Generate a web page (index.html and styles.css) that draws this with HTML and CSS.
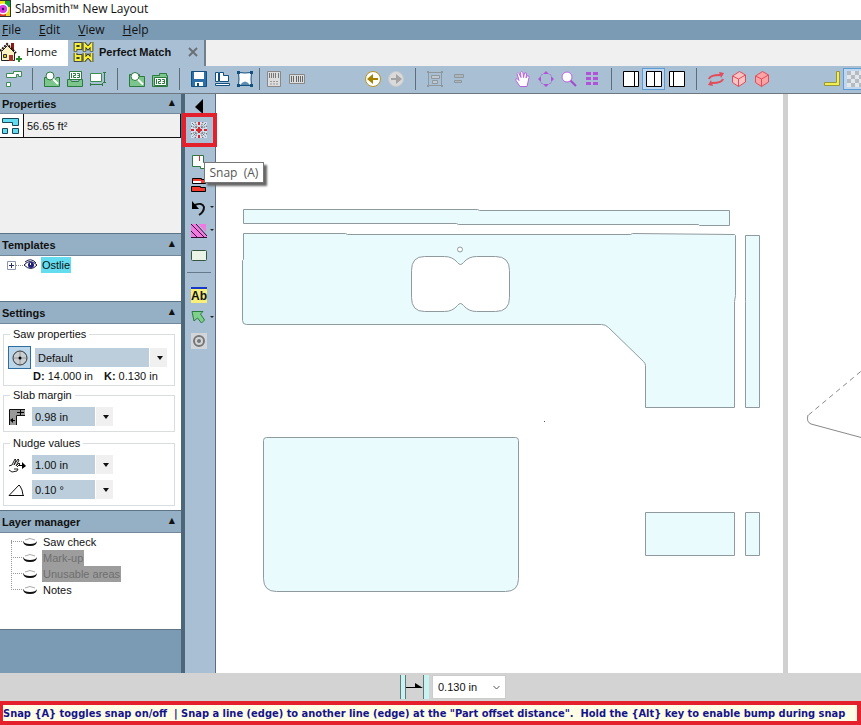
FILE: index.html
```html
<!DOCTYPE html>
<html lang="en">
<head>
<meta charset="utf-8">
<title>Slabsmith New Layout</title>
<link rel="stylesheet" href="styles.css">
</head>
<body>
<header class="titlebar">
  <svg class="app-icon" width="11" height="18" viewBox="0 0 11 18" aria-hidden="true"><path fill="#333" d="M0 0h11v17H0z"/><path fill="#f7e01c" d="M0 1h5v5H0z"/><path fill="#14a53c" d="M5 1h5v6H5z"/><path fill="#e8df20" d="M6 7h4v9H6z"/><path fill="#e33b22" d="M0 13h6v3H0z"/><circle cx="3" cy="9" r="5.500" fill="#fff"/><circle cx="3" cy="9" r="4" fill="#d43be0"/><circle cx="3" cy="9" r="1.200" fill="#3a0b60"/></svg>
  <h1>Slabsmith™ New Layout</h1>
</header>
<nav class="menubar">
  <button><u>F</u>ile</button><button><u>E</u>dit</button><button><u>V</u>iew</button><button><u>H</u>elp</button>
</nav>
<div class="tabs">
  <button class="tab home">
    <svg width="22" height="20" viewBox="0 0 22 20" aria-hidden="true"><path fill="#8b1b12" d="M11 1h3v7h-3z"/><path fill="#fff3c4" stroke="#222" d="M1.500 18.500v-9l6-6 7 7v8z"/><path fill="none" stroke="#24170f" stroke-width="2" stroke-dasharray="2 1" d="M0 9l7-7 9 9"/><path fill="#a8352a" d="M9 13h4v6H9z"/><path fill="#e8c21a" stroke="#333" d="M3.500 12.500h3v3h-3z"/><path fill="#2c8a2d" d="M18 14h2v2h2v2h-2v2h-2v-2h-2v-2h2z"/></svg>
    Home
  </button>
  <div class="tab active">
    <svg width="21" height="20" viewBox="0 0 21 20" aria-hidden="true"><path fill="none" stroke="#222" stroke-width="3.600" d="M2.500 9.500V2h5v4h-5M11.500 9.500V2l3.500 4 3.500-4v7.500M2.500 11v7h5v-4h-5M11.500 11v7l3.500-4 3.500 4v-7"/><path fill="none" stroke="#f7f03a" stroke-width="2" d="M2.500 9V2h5v4h-5M11.500 9V2l3.500 4 3.500-4v7M2.500 11v7h5v-4h-5M11.500 11v7l3.500-4 3.500 4v-7"/></svg>
    <span>Perfect Match</span>
    <button class="close" aria-label="Close tab"><svg width="10" height="10" viewBox="0 0 10 10"><path d="M1 1l8 8M9 1l-8 8" stroke="#6b6f76" stroke-width="2"/></svg></button>
  </div>
</div>
<div class="toolbar" role="toolbar" aria-label="Main">
  <button class="tool" aria-label="Parts"><svg viewBox="0 0 16 16"><path fill="#fff" stroke="#3b8b52" d="M7.500.500h8v5h-3v-2h-2v3H.500v-4h7zM.500 11.500h4v4h-4z"/></svg></button>
  <i class="sep first"></i>
  <button class="tool" aria-label="Find slab"><svg viewBox="0 0 16 16"><path fill="#7cc68b" stroke="#2c7a41" d="M.500 6.500h3l1 2h7l1-2h3v9H.500z"/><circle cx="6" cy="5" r="4" fill="#fff" stroke="#2c7a41"/><path stroke="#fff" stroke-width="2" d="M9 8l5 5"/></svg></button>
  <button class="tool" aria-label="Slab number"><svg viewBox="0 0 16 16"><path fill="#7cc68b" stroke="#2c7a41" d="M.500 8.500h3l1 2h7l1-2h3v7H.500z"/><path fill="#fff" stroke="#2c7a41" d="M2.500.500h12v8h-12z"/><path fill="none" stroke="#2c7a41" d="M4.500 2v5M6 2.500h2.500v2H6.500v2H9M10 2.500h2.500v4H10M10.500 4.500h2"/></svg></button>
  <button class="tool" aria-label="Slab size"><svg viewBox="0 0 16 16"><path fill="#fff" stroke="#3b8b52" d="M.500 2.500h11v8H.500z"/><path fill="none" stroke="#2c7a41" d="M14.500 2v9M13 1.500h3M13 11.500h3M1 13.500h11M.500 12v3M12.500 12v3"/></svg></button>
  <i class="sep"></i>
  <button class="tool" aria-label="Find job"><svg viewBox="0 0 16 16"><path fill="#7cc68b" stroke="#2c7a41" d="M.500 3.500h10v2h5v10H.500z"/><circle cx="6" cy="5.500" r="4" fill="#fff" stroke="#2c7a41"/><path stroke="#fff" stroke-width="2" d="M9 8.500l5 5"/></svg></button>
  <button class="tool" aria-label="Job number"><svg viewBox="0 0 16 16"><path fill="#7cc68b" stroke="#2c7a41" d="M.500 4.500h7v-2h7v2h1v11H.500z"/><path fill="#fff" stroke="#2c7a41" d="M2.500 6.500h12v8h-12z"/><path fill="none" stroke="#2c7a41" d="M4.500 8v5M6 8.500h2.500v2H6.500v2H9M10 8.500h2.500v4H10M10.500 10.500h2"/></svg></button>
  <i class="sep"></i>
  <button class="tool" aria-label="Save"><svg viewBox="0 0 16 16"><path fill="#2a6fa8" stroke="#12507f" d="M.500.500h15v15H.500z"/><path fill="#fff" d="M3 1h10v7H3zM4 11h8v4H4z"/><path fill="#12507f" d="M6 12h2v3H6z"/></svg></button>
  <button class="tool" aria-label="Save slab"><svg viewBox="0 0 16 16"><path fill="#fff" stroke="#12507f" d="M1.500 1.500h3v9h-3zM5.500 1.500h4v3h5v6h-9zM1.500 12.500h14v2h-14z"/></svg></button>
  <button class="tool" aria-label="Save image"><svg viewBox="0 0 16 16"><path fill="#fff" stroke="#12507f" d="M1.500 1.500q6.500 1 13 0-1 6.500 0 13h-13q1-6.500 0-13z"/><path fill="#5b8bb0" d="M3 14q5-7 10 0z"/><path fill="#12507f" d="M0 0h3v3H0zM13 0h3v3h-3zM0 13h3v3H0zM13 13h3v3h-3z"/></svg></button>
  <i class="sep narrow"></i>
  <button class="tool" aria-label="Label sheet" disabled><svg viewBox="0 0 16 16"><path fill="#ddd" stroke="#888" d="M1.500.500h13v15h-13z"/><path stroke="#777" d="M3.500 2v5M5.500 2v5M7.500 2v5M9.500 2v5M12.500 2v5"/><path stroke="#999" stroke-dasharray="2 1" d="M4 10.500h8M4 13h8"/></svg></button>
  <button class="tool" aria-label="Bar code" disabled><svg viewBox="0 0 16 16"><path fill="#ddd" stroke="#888" d="M.500 3.500h15v9H.500z"/><path stroke="#666" d="M2.500 5v6M4.500 5v6M7.500 5v6M9.500 5v6M11.500 5v6M13.500 5v6"/></svg></button>
  <i class="gap wide"></i>
  <button class="tool" aria-label="Back"><svg viewBox="0 0 16 16"><circle cx="8" cy="8" r="7.500" fill="#fff" stroke="#b8941c"/><path fill="#a68200" d="M2 8l6-5v4h5v2H8v4z"/></svg></button>
  <button class="tool" aria-label="Forward" disabled><svg viewBox="0 0 16 16"><circle cx="8" cy="8" r="7.500" fill="#dadada" stroke="#c4c8cc"/><path fill="#a3a3a3" d="M14 8L8 3v4H3v2h5v4z"/></svg></button>
  <i class="sep"></i>
  <button class="tool" aria-label="Group" disabled><svg viewBox="0 0 16 16"><path fill="none" stroke="#8e989f" d="M1.500 1.500h13v13h-13z"/><path fill="#c3c9cd" stroke="#8e989f" d="M4.500 4.500h8v3h-8zM5.500 9.500h5v3h-5z"/><path fill="#8e989f" d="M0 0h2v2H0zM14 0h2v2h-2zM0 14h2v2H0zM14 14h2v2h-2z"/></svg></button>
  <button class="tool" aria-label="Ungroup" disabled><svg viewBox="0 0 16 16"><path fill="#aeb6bb" stroke="#8e989f" d="M4.500 3.500h9v3h-9zM4.500 9.500h7v2h-7z"/></svg></button>
  <i class="gap"></i>
  <button class="tool" aria-label="Pan"><svg viewBox="0 0 16 16"><path fill="#fff" stroke="#b865dc" d="M5 15.500L1 9.500q-1-2 1-2l2 2-2-7q1-2 2 0l2 4-.500-5q1-2 2.500 0l.500 5 1-4.500q2-1 2 1l-.500 4 1.500-2.500q2 0 1.500 2l-2 9z"/></svg></button>
  <button class="tool" aria-label="Fit"><svg viewBox="0 0 16 16"><path fill="#b053d8" d="M8 0l3 3H5zM8 16l3-3H5zM0 8l3-3v6zM16 8l-3-3v6z"/><path fill="none" stroke="#b053d8" d="M3 4.500l1.500-1.500M13 4.500L11.500 3M3 11.500L4.500 13M13 11.500L11.500 13"/></svg></button>
  <button class="tool" aria-label="Zoom"><svg viewBox="0 0 16 16"><path stroke="#a24acb" stroke-width="2" d="M9 9l6 6"/><circle cx="6" cy="6" r="5" fill="#fff" stroke="#b865dc"/></svg></button>
  <button class="tool" aria-label="Grid"><svg viewBox="0 0 16 16"><path fill="#b053d8" d="M2 1h5v3H2zM9 1h5v3H9zM2 6h5v3H2zM9 6h5v3H9zM2 11h5v3H2zM9 11h5v3H9z"/></svg></button>
  <i class="sep"></i>
  <button class="tool" aria-label="Left view"><svg viewBox="0 0 16 16"><path fill="#fff" stroke="#000" d="M.500.500h15v15H.500zM11.500.500v15"/></svg></button>
  <button class="tool on" aria-label="Split view"><svg viewBox="0 0 16 16"><path fill="#fff" stroke="#000" d="M.500.500h15v15H.500zM8.500.500v15"/></svg></button>
  <button class="tool" aria-label="Right view"><svg viewBox="0 0 16 16"><path fill="#fff" stroke="#000" d="M.500.500h15v15H.500zM4.500.500v15"/></svg></button>
  <i class="sep"></i>
  <button class="tool" aria-label="Swap"><svg viewBox="0 0 16 16"><path fill="none" stroke="#e24b57" stroke-width="2" d="M1 8q1-4 11-4M15 8q-1 4-11 4"/><path fill="#e24b57" d="M11 1l5 1-3 5zM5 15l-5-1 3-5z"/></svg></button>
  <button class="tool" aria-label="Wire block"><svg viewBox="0 0 16 16"><g fill="#f7c4c6" stroke="#e24b57"><path d="M1.500 5l7-4.500 6 3.500v7l-7 4.500-6-4z"/><path fill="none" d="M1.500 5l6 3 7-4M7.500 8v7.500"/></g></svg></button>
  <button class="tool" aria-label="Solid block"><svg viewBox="0 0 16 16"><g fill="#fba3a5" stroke="#e24b57"><path d="M1.500 5l7-4.500 6 3.500v7l-7 4.500-6-4z"/><path fill="none" d="M1.500 5l6 3 7-4M7.500 8v7.500"/></g></svg></button>
  <i class="gap last"></i>
  <button class="tool" aria-label="Ruler"><svg viewBox="0 0 16 16"><path fill="#f1ee55" stroke="#98963a" d="M12.500.500h3v14H.500v-3h12z"/></svg></button>
  <button class="tool on" aria-label="Transparency"><svg viewBox="0 0 16 16"><path fill="#e4e6e8" d="M0 0h16v16H0z"/><path fill="#b3bcc4" d="M0 0h4v4H0zM8 0h4v4H8zM4 4h4v4H4zM12 4h4v4h-4zM0 8h4v4H0zM8 8h4v4H8zM4 12h4v4H4zM12 12h4v4h-4z"/></svg></button>
</div>
<main class="workspace">
  <aside class="sidebar">
    <section class="panel properties">
      <h2>Properties<button aria-label="Collapse Properties">▲</button></h2>
      <div class="area-row">
        <span class="area-icon"><svg width="18" height="16" viewBox="0 0 18 16"><path fill="#63dcf0" stroke="#17495a" d="M.500.500h16v7h-6v-3h-10zM.500 10.500h5v5h-5zM10.500 10.500h6v5h-6z"/></svg></span>
        <output>56.65 ft²</output>
      </div>
    </section>
    <section class="panel templates">
      <h2>Templates<button aria-label="Collapse Templates">▲</button></h2>
      <div class="tree-node">
        <svg width="31" height="16" viewBox="0 0 31 16" aria-hidden="true"><path fill="#fff" stroke="#8c94a8" d="M.500 4.500h8v8h-8z"/><path stroke="#2a2f60" d="M2 8.500h5M4.500 6v5"/><path stroke="#888" stroke-dasharray="1 1" d="M9 8.500h7"/><path fill="#fff" stroke="#15154f" d="M17 8q6-7 13 0-6 7-13 0z"/><circle cx="24" cy="8" r="3" fill="#20207a"/><path fill="none" stroke="#15154f" d="M18 5q6-5 11 1"/><path fill="#fff" d="M23 6h1v2h-1z"/></svg>
        <span class="picked">Ostlie</span>
      </div>
    </section>
    <section class="panel settings">
      <h2>Settings<button aria-label="Collapse Settings">▲</button></h2>
      <div class="groups">
        <fieldset>
          <legend>Saw properties</legend>
          <div class="field saw">
            <button class="blade" aria-label="Saw"><svg width="16" height="16" viewBox="0 0 16 16"><circle cx="8" cy="8" r="7" fill="#c9ced2" stroke="#333"/><path stroke="#999" d="M8 2v12M2 8h12"/><circle cx="8" cy="8" r="1.500"/></svg></button>
            <span class="combo grow"><select aria-label="Saw"><option>Default</option></select></span>
          </div>
          <p class="blade-data"><span><b>D:</b> 14.000 in</span><span><b>K:</b> 0.130 in</span></p>
        </fieldset>
        <fieldset class="margin">
          <legend>Slab margin</legend>
          <div class="field">
            <svg width="18" height="18" viewBox="0 0 18 18" aria-hidden="true"><path fill="#999" d="M2 2h15v5H8v10H2z"/><path fill="none" stroke="#111" d="M1.500 17V1.500H17M17 7.500H8.500V17"/><path d="M12 2h1v2h3v1h-3v2h-1V5H9V4h3zM2 12l3-2v2h2v1H5v2z"/></svg>
            <span class="combo"><select aria-label="Slab margin"><option>0.98 in</option></select></span>
          </div>
        </fieldset>
        <fieldset class="nudge">
          <legend>Nudge values</legend>
          <div class="field">
            <svg width="18" height="18" viewBox="0 0 18 18" aria-hidden="true"><path fill="none" stroke="#222" d="M1 10l3-1 3-6 1 1-2 5 4-6 1 1-3 6 3-3 1 1-3 3M1 14l3 2 5-1 1-2H6"/><path d="M11 9h3V6l4 4-4 3v-3h-3z"/></svg>
            <span class="combo"><select aria-label="Nudge distance"><option>1.00 in</option></select></span>
          </div>
          <div class="field">
            <svg width="18" height="18" viewBox="0 0 18 18" aria-hidden="true"><path fill="none" stroke="#111" d="M1 14.500h15M1 14.500L11 4l1 1 2 4 1 5"/></svg>
            <span class="combo"><select aria-label="Nudge angle"><option>0.10 °</option></select></span>
          </div>
        </fieldset>
      </div>
    </section>
    <section class="panel layers">
      <h2>Layer manager<button aria-label="Collapse Layer manager">▲</button></h2>
      <ul>
        <li><svg class="eye" viewBox="0 0 14 10"><path fill="none" stroke="#aaa" d="M2 3q5-3 10 0"/><path fill="#111" d="M0 4q1 3 7 3t7-3q0 5-7 5T0 4z"/></svg><span>Saw check</span></li>
        <li><svg class="eye" viewBox="0 0 14 10"><path fill="none" stroke="#aaa" d="M2 3q5-3 10 0"/><path fill="#111" d="M0 4q1 3 7 3t7-3q0 5-7 5T0 4z"/></svg><span class="off">Mark-up</span></li>
        <li><svg class="eye" viewBox="0 0 14 10"><path fill="none" stroke="#aaa" d="M2 3q5-3 10 0"/><path fill="#111" d="M0 4q1 3 7 3t7-3q0 5-7 5T0 4z"/></svg><span class="off">Unusable areas</span></li>
        <li><svg class="eye" viewBox="0 0 14 10"><path fill="none" stroke="#aaa" d="M2 3q5-3 10 0"/><path fill="#111" d="M0 4q1 3 7 3t7-3q0 5-7 5T0 4z"/></svg><span>Notes</span></li>
      </ul>
    </section>
  </aside>
  <div class="palette" role="toolbar" aria-label="Drawing">
    <button class="tool" aria-label="Hide sidebar"><svg viewBox="0 0 16 16"><path d="M12 1v15L4 9z"/></svg></button>
    <div class="snap">
      <button class="tool" aria-label="Snap"><svg viewBox="0 0 16 16"><path fill="#d5e0ec" d="M0 0h16v16H0z"/><path stroke="#444" stroke-dasharray="1 1" d="M1 1l14 14M15 1L1 15M0 4l5 2M0 12l5-2M16 4l-5 2M16 12l-5-2M4 0l2 5M12 0l-2 5M4 16l2-5M12 16l-2-5"/><path stroke="#d7262e" stroke-width="2" d="M8 0v3M8 13v3M0 8h3M13 8h3M8 5v6M5 8h6"/></svg></button>
      <span class="tooltip" role="tooltip">Snap&nbsp; (A)</span>
    </div>
    <button class="tool" aria-label="Split"><svg viewBox="0 0 16 16"><path fill="#fff" stroke="#2c7a41" d="M1.500 1.500h11v7h3v6h-6v-2h-8z"/><path stroke="#c33" d="M8.500 1v6"/></svg></button>
    <button class="tool" aria-label="Align"><svg viewBox="0 0 16 16"><g stroke="#000"><path fill="#f33a30" d="M1.500 1.500h9v1h4v4h-13z"/><path fill="#fff" stroke="none" d="M2 4h8v2H2z"/><path fill="#f33a30" d="M.500 9.500h9v1h5v4H.500z"/></g></svg></button>
    <button class="tool more" aria-label="Rotate"><svg viewBox="0 0 16 16"><path fill="none" stroke="#111" stroke-width="2" d="M4 5q7-3 9 2 0 5-5 8"/><path d="M1 1v8h7z"/></svg></button>
    <button class="tool more" aria-label="Veins"><svg viewBox="0 0 16 16"><path fill="#f279e2" d="M0 1h5l11 12v1H0zM7 1h8v8z"/><path fill="none" stroke="#301030" d="M0 1l13 13M5 1l11 12M0 14.500h16M0 8l6 6"/></svg></button>
    <button class="tool rect" aria-label="Rectangle"><svg viewBox="0 0 16 16"><rect x=".5" y="2.500" width="15" height="10" rx="1" fill="#e9f3e6" stroke="#385543"/></svg></button>
    <hr>
    <button class="tool" aria-label="Text"><span class="ab">Ab</span></button>
    <button class="tool more" aria-label="Select"><svg viewBox="0 0 16 16"><path fill="#7ed08a" stroke="#2c7a41" d="M1 1.500h11L9.500 4l4 6-3 3-4-5L3 11z"/></svg></button>
    <button class="tool" aria-label="Target"><svg viewBox="0 0 16 16"><path fill="#d3d6d8" d="M0 0h16v16H0z"/><circle cx="8" cy="8" r="5" fill="none" stroke="#777" stroke-width="2"/><circle cx="8" cy="8" r="2" fill="#777"/></svg></button>
  </div>
  <div class="canvas">
    <svg class="drawing" aria-label="Template parts">
      <g transform="translate(-216 -94)" fill="#eafbfe" stroke="#8f9a9e">
        <path d="M243.500 209.500h234l2 1h250v15h-30l-1-1h-240l-2-1h-213z"/>
        <path d="M243.500 233.500h102l2 1h283l2-1 102 1 1 1v60l-1 6v106h-89v-42q0-2-2-4l-35-34q-3-3-7-3H246.500q-4 0-4-4v-60l1-1z"/>
        <path fill="#fff" d="M424.500 256.500h20q8 0 13 6 3 4 6 0 5-6 13-6h19q14 0 14 14v27q0 14-14 14h-19q-8 0-13-6-3-4-6 0-5 6-13 6h-20q-13 0-13-14v-27q0-14 13-14z"/>
        <circle cx="460" cy="249.500" r="2.500" fill="#fff"/>
        <path d="M745.500 235.500h14v172h-14v-106z"/>
        <path d="M266.500 437.500h249q3 0 3 3v138q0 13-13 13h-229q-13 0-13-13v-138q0-3 3-3z"/>
        <path d="M645.500 512.500h89v43h-89zM745.500 512.500h14v43h-14z"/>
        <path fill="#555" stroke="none" d="M544 421h1v1h-1z"/>
      </g>
    </svg>
  </div>
  <div class="canvas slab">
    <svg class="drawing" aria-label="Slab outline"><path fill="none" stroke="#888" stroke-dasharray="5 4" d="M20.500 321l54-45"/><path fill="none" stroke="#888" d="M20 321q-2 7 3 9l52 14"/></svg>
  </div>
</main>
<div class="offset-bar">
  <svg width="29" height="24" viewBox="0 0 29 24" aria-hidden="true"><path fill="#c7f3f1" d="M0 0h5v24H0zM24 0h5v24h-5z"/><path stroke="#66777a" d="M5.500 0v24M.500 0v24M23.500 0v24"/><path d="M6 12h9V8l8 5H6z"/></svg>
  <label class="offset"><select aria-label="Part offset distance"><option>0.130 in</option></select><svg width="7" height="5" viewBox="0 0 7 5"><path fill="none" stroke="#555" d="M.500 1l3 3 3-3"/></svg></label>
</div>
<footer class="status">Snap {A} toggles snap on/off&nbsp; | Snap a line (edge) to another line (edge) at the "Part offset distance".&nbsp; Hold the {Alt} key to enable bump during snap</footer>
</body>
</html>
```
FILE: styles.css
```css
* { box-sizing: border-box; }
body {
  margin: 0;
  min-height: 100vh;
  display: flex;
  flex-direction: column;
  overflow: hidden;
  background: #fff;
  color: #111;
  font: 11px/16px "Liberation Sans", Arial, sans-serif;
}
button, select { font: inherit; color: inherit; border: 0; background: none; padding: 0; margin: 0; }
svg { display: block; flex: none; }
h1, h2, p, ul { margin: 0; padding: 0; font: inherit; }

.titlebar { display: flex; align-items: center; gap: 4px; height: 20px; padding-bottom: 2px; }
.titlebar h1 { font: 12px/18px "Open Sans", sans-serif; }
.menubar { display: flex; gap: 18px; height: 20px; padding-left: 2px; background: #7b9bb5; font: 12px/20px "Open Sans", sans-serif; }

.tabs { display: flex; height: 26px; background: #f0f0f0; }
.tab { display: flex; align-items: center; }
.home { width: 68px; gap: 4px; padding-bottom: 2px; background: #fff; font: 11px/20px "Open Sans", sans-serif; }
.active { width: 138px; gap: 5px; padding: 0 6px 2px 5px; background: #a9c0d4; border-right: 2px solid #6f7f8c; font-weight: bold; white-space: nowrap; }
.close { margin-left: auto; }

.toolbar { display: flex; align-items: center; height: 28px; padding: 0 0 2px 2px; background: #a9c0d4; border-bottom: 1px solid #6d7780; }
.tool { display: flex; align-items: center; justify-content: center; flex: none; width: 23px; height: 22px; }
.tool svg { width: 16px; height: 16px; }
.tool.on { background: #bfd8ef; outline: 1px solid #5f9bd0; outline-offset: -1px; }
.sep { flex: none; width: 16px; height: 22px; background: linear-gradient(#5d6d7a, #5d6d7a) center / 1px 100% no-repeat; }
.sep.first { width: 15px; }
.sep.narrow { width: 6px; }
.gap { flex: none; width: 42px; }
.gap.wide { width: 53px; }
.gap.last { width: 47px; }

.workspace { flex: 1; display: flex; }
.sidebar { flex: none; width: 185px; background: #7b9bb5; border-right: 4px solid #4d6679; }
.panel { background: #fff; border-bottom: 1px solid #5d7487; }
.panel h2 { display: flex; justify-content: space-between; align-items: center; height: 22px; padding: 0 6px 0 2px; background: #95b0c4; border-bottom: 1px solid #72889a; font-weight: bold; }
.panel h2 button { font: 8px/16px "DejaVu Sans", sans-serif; padding-bottom: 2px; }
.properties { min-height: 140px; background: #f0f0f0; }
.panel.properties h2 { height: 20px; }
.area-row { display: flex; align-items: center; height: 24px; border: solid #111; border-width: 0 1px 1px 0; }
.area-icon { align-self: stretch; display: flex; align-items: center; width: 24px; padding-left: 2px; border-right: 1px solid #111; background: #fff; }
.area-row output { padding-left: 3px; }
.templates { min-height: 68px; }
.tree-node { display: flex; gap: 3px; padding: 1px 0 0 7px; }
.picked { background: #63dcf0; padding: 0 1px; }
.groups { padding: 2px 6px 4px 3px; }
fieldset { margin: 0; padding: 4px 0 2px 4px; border: 1px solid #d9dde0; min-width: 0; }
legend { margin-left: 2px; padding: 0 3px; }
.field { display: flex; align-items: center; gap: 6px; }
.saw { gap: 4px; }
.blade { display: flex; align-items: center; justify-content: center; width: 23px; height: 23px; border: 1px solid #2f6da0; background: #bcd6ea; }
.combo { position: relative; width: 81px; background: #f0f0f0; }
.combo.grow { flex: none; width: 132px; }
.combo select { appearance: none; display: block; width: calc(100% - 17px); height: 19px; padding: 0 3px; background: #bccddb; border-right: 1px solid #fff; }
.combo::after { content: ""; position: absolute; right: 4px; top: 8px; border: solid transparent; border-width: 4px 3px 0; border-top-color: #111; }
.blade-data { display: flex; gap: 11px; padding-left: 25px; line-height: 14px; white-space: nowrap; }
.margin { margin-top: 1px; padding-bottom: 5px; }
.nudge { margin-top: 3px; padding-bottom: 6px; }
.nudge .field + .field { margin-top: 6px; }
.layers { min-height: 119px; }
.layers ul { list-style: none; margin: 1px 0 0 11px; }
.layers li { position: relative; display: flex; align-items: center; gap: 5px; height: 16px; }
.layers li::before { content: ""; position: absolute; left: 0; bottom: 8px; width: 12px; height: 16px; border: dotted #999; border-width: 0 0 1px 1px; }
.layers li:first-child::before { height: 1px; }
.layers .eye { width: 14px; height: 10px; margin-left: 12px; }
.layers span { padding: 0 1px; }
.layers .off { background: #9d9d9d; color: #6f6f6f; }

.palette { flex: none; display: flex; flex-direction: column; align-items: center; width: 31px; padding-right: 2px; background: #a9c0d4; border-right: 1px solid #5d6d7a; }
.palette .tool { position: relative; height: 23px; }
.palette > .tool:first-child { height: 24px; }
.snap { position: relative; margin-bottom: 8px; }
.palette .snap .tool { height: 24px; }
.snap::before { content: ""; position: absolute; z-index: 1; inset: -5px -6px; border: 4px solid #e3202b; }
.tooltip { position: absolute; z-index: 2; left: 16px; top: 44px; padding: 0 5px; border: 1px solid #777; background: #fff; box-shadow: 3px 3px 2px #666; color: #555; font: 12px/19px "Open Sans", sans-serif; white-space: nowrap; }
.more::after { content: ""; position: absolute; right: -3px; top: 10px; border: 2px solid transparent; border-top-color: #222; }
.palette .rect { margin-top: 2px; }
.palette hr { width: 24px; margin: 5px 0 10px; border: 0; border-top: 1px solid #66798a; }
.ab { width: 16px; border-top: 2px solid #1838c8; background: #f7ef7a; font: bold 12px/14px "Liberation Sans", Arial, sans-serif; }
.canvas { flex: 1; display: flex; min-width: 0; }
.slab { flex: none; width: 9.1%; border-left: 5px solid #d0d0d0; }
.drawing { flex: 1; width: 100%; height: auto; min-width: 0; }

.offset-bar { display: flex; align-items: center; justify-content: center; gap: 3px; height: 28px; padding-left: 45px; background: #d3d3d3; }
.offset { display: flex; align-items: center; width: 74px; height: 24px; padding: 0 5px; background: #fff; border: 1px solid #ccc; }
.offset select { appearance: none; flex: 1; }
.status { height: 24px; border: solid #e3202b; border-width: 4px 4px 4px 3px; background: #fffde6; color: #14148c; font: bold 11px/18px "DejaVu Sans Condensed", "DejaVu Sans", sans-serif; white-space: nowrap; overflow: hidden; }
```
